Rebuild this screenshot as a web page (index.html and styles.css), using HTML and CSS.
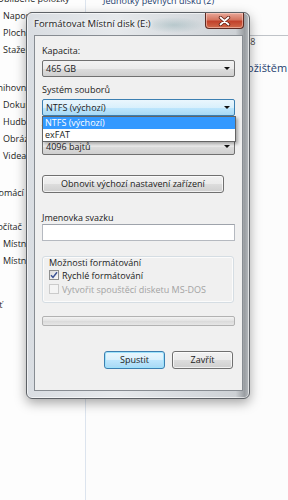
FILE: index.html
```html
<!DOCTYPE html>
<html lang="cs">
<head>
  <meta charset="UTF-8">
  <title>Formátovat Místní disk (E:)</title>
  <meta name="viewport" content="width=device-width, initial-scale=1.0" />
  <link rel="stylesheet" href="styles.css">
</head>
<body>
  <div class="explorer">
    <div class="nav">
      <div class="nav-list">
        <div class="nav-item first">Oblíbené položky</div>
        <div class="nav-item sub">Naposledy navštívené</div>
        <div class="nav-item sub">Plocha</div>
        <div class="nav-item sub">Stažené soubory</div>
        <div class="nav-item head gap-lib">Knihovny</div>
        <div class="nav-item sub">Dokumenty</div>
        <div class="nav-item sub">Hudba</div>
        <div class="nav-item sub">Obrázky</div>
        <div class="nav-item sub">Videa</div>
        <div class="nav-item head gap-home">Domácí skupina</div>
        <div class="nav-item head gap-pc">Počítač</div>
        <div class="nav-item sub">Místní disk (C:)</div>
        <div class="nav-item sub">Místní disk (E:)</div>
        <div class="nav-item head gap-net">Síť</div>
      </div>
    </div>
    <div class="main">
      <div class="group-title">Jednotky pevných disků (2)</div>
      <div class="drive">
        <div class="drive-bar"></div>
        <div class="drive-text">148</div>
      </div>
      <div class="group-title second">Zařízení s vyměnitelným úložištěm (1)</div>
    </div>
  </div>

  <!-- Dialog Formátovat -->
  <div class="dialog">
    <div class="titlebar">
      <span class="title">Formátovat Místní disk (E:)</span>
      <div class="close">
        <svg width="13" height="10" viewBox="0 0 13 10">
          <path d="M2.5 1.5 L10.5 8.5 M10.5 1.5 L2.5 8.5" stroke="#5a1c12" stroke-width="3.4" stroke-linecap="round"/>
          <path d="M2.5 1.5 L10.5 8.5 M10.5 1.5 L2.5 8.5" stroke="#fff" stroke-width="1.8" stroke-linecap="round"/>
        </svg>
      </div>
    </div>
    <div class="client">
      <div class="label">Kapacita:</div>
      <div class="combo">465 GB<span class="arrow"></span></div>

      <div class="label mt">Systém souborů</div>
      <div class="combo focus">NTFS (výchozí)<span class="arrow"></span></div>

      <div class="label mt">Velikost alokační jednotky</div>
      <div class="combo">4096 bajtů<span class="arrow"></span></div>

      <div class="btn wide">Obnovit výchozí nastavení zařízení</div>

      <div class="label vol">Jmenovka svazku</div>
      <div class="input"></div>

      <div class="group">
        <div class="group-label">Možnosti formátování</div>
        <div class="check-row top">
          <span class="check on">
            <svg width="8" height="8" viewBox="0 0 8 8"><path d="M1 4.2 L3 6.4 L7 1.2" fill="none" stroke="#3c5394" stroke-width="1.5"/></svg>
          </span>
          Rychlé formátování
        </div>
        <div class="check-row disabled">
          <span class="check"></span>
          Vytvořit spouštěcí disketu MS-DOS
        </div>
      </div>

      <div class="progress"></div>

      <div class="buttons">
        <div class="btn default">Spustit</div>
        <div class="btn">Zavřít</div>
      </div>

      <!-- rozbalený seznam -->
      <div class="dropdown-list">
        <div class="opt selected">NTFS (výchozí)</div>
        <div class="opt">exFAT</div>
      </div>
    </div>
  </div>
</body>
</html>
```

FILE: styles.css
```css
* {
  box-sizing: border-box;
}
body {
  margin: 0;
  width: 288px;
  height: 500px;
  overflow: hidden;
  background: #fcfcfc;
  font-family: "Open Sans", "Liberation Sans", sans-serif;
  font-size: 9px;
  color: #1b1b1b;
  position: relative;
}
.explorer {
  display: flex;
  height: 500px;
}
.nav {
  width: 86px;
  flex-shrink: 0;
  border-right: 1px solid #dce4ee;
  overflow: hidden;
  background: #fdfdfd;
}
.nav-list {
  margin-top: -10px;
}
.nav-item {
  line-height: 17px;
  height: 17px;
  white-space: nowrap;
  color: #1e1e1e;
}
.nav-item.first {
  margin-left: -3px;
}
.nav-item.sub {
  padding-left: 3px;
}
.nav-item.head {
  margin-left: -8px;
}
.gap-lib { margin-top: 21px; }
.gap-home { margin-top: 20px; }
.gap-pc { margin-top: 17px; }
.gap-net { margin-top: 27px; }

.main {
  flex: 1;
  padding-left: 17px;
  overflow: hidden;
}
.group-title {
  color: #1e3f6e;
  white-space: nowrap;
  line-height: 14px;
  margin-top: -6px;
}
.drive {
  margin-top: 27px;
  padding-left: 137px;
}
.drive-bar {
  border-top: 1px solid #bfc3c8;
}
.drive-text {
  line-height: 12px;
  color: #444;
}
.group-title.second {
  margin-top: 13px;
  padding-left: 8px;
  font-size: 11px;
}

/* Dialog */
.dialog {
  position: absolute;
  left: 26px;
  top: 12px;
  width: 224px;
  border: 1px solid #5d6166;
  border-radius: 6px;
  padding: 0 6px 7px 7px;
  background: linear-gradient(to right, #d9dde2 0%, #e6e9ec 40%, #d6dade 75%, #cdd1d5 94%, #9a9ea2 98%, #b8bcc0 100%);
  box-shadow: 0 4px 12px rgba(0,0,0,0.35), inset 0 0 0 1px rgba(255,255,255,0.6);
}
.titlebar {
  height: 22px;
  display: flex;
  align-items: flex-start;
  background: radial-gradient(ellipse 30px 8px at 140px 12px, rgba(120,160,165,0.35), transparent);
}
.title {
  font-size: 9.5px;
  line-height: 22px;
  color: #1a1a1a;
  text-shadow: 0 0 5px #fff, 0 0 3px #fff;
  white-space: nowrap;
}
.close {
  margin-left: auto;
  margin-right: -1px;
  width: 39px;
  height: 16px;
  border: 1px solid #5e2a22;
  border-top: none;
  border-radius: 0 0 4px 4px;
  background: linear-gradient(#e9a899 0%, #d47560 45%, #c2412b 55%, #d06a4a 100%);
  box-shadow: inset 0 0 0 1px rgba(255,220,210,0.5);
  display: flex;
  align-items: center;
  justify-content: center;
}
.client {
  position: relative;
  background: #f0f0f0;
  border: 1px solid #878c92;
  padding: 8px 7px 21px 7px;
}
.label {
  line-height: 14px;
  margin-bottom: 2px;
  white-space: nowrap;
}
.label.mt {
  margin-top: 6px;
}
.label.vol {
  margin-top: 18px;
  line-height: 13px;
  margin-bottom: 0;
}
.combo {
  position: relative;
  width: 193px;
  height: 17px;
  line-height: 15px;
  padding-left: 3px;
  border: 1px solid #707070;
  border-radius: 2px;
  background: linear-gradient(#f3f3f3 0%, #ebebeb 50%, #dddddd 51%, #cfcfcf 100%);
}
.combo.focus {
  border-color: #3c7fb1;
  background: linear-gradient(#eaf6fd 0%, #d9f0fc 50%, #bee6fd 51%, #a7d9f5 100%);
}
.arrow {
  position: absolute;
  right: 4px;
  top: 6px;
  border-left: 3px solid transparent;
  border-right: 3px solid transparent;
  border-top: 3px solid #111;
}
.btn {
  height: 18px;
  line-height: 16px;
  text-align: center;
  border: 1px solid #707070;
  border-radius: 3px;
  background: linear-gradient(#f2f2f2 0%, #ebebeb 50%, #dddddd 51%, #cfcfcf 100%);
  box-shadow: inset 0 0 0 1px rgba(255,255,255,0.7);
  white-space: nowrap;
}
.btn.wide {
  margin-top: 20px;
  width: 182px;
}
.input {
  width: 193px;
  height: 17px;
  background: #fff;
  border: 1px solid #b5b9c0;
  border-top-color: #9ea3ab;
}
.group {
  margin-top: 15px;
  width: 192px;
  border: 1px solid #d5dde3;
  border-radius: 3px;
  padding: 0 0 6px 6px;
  box-shadow: inset 0 0 0 1px #fbfbfb;
}
.group-label {
  line-height: 12px;
}
.check-row {
  display: flex;
  align-items: center;
  gap: 3px;
  height: 14px;
  white-space: nowrap;
}
.check-row.top {
  margin-top: -1px;
}
.check {
  width: 10px;
  height: 10px;
  border: 1px solid #8e8f8f;
  background: linear-gradient(135deg, #dcdcdc, #fafafa);
  display: flex;
  align-items: center;
  justify-content: center;
}
.check-row.disabled {
  color: #a3a3a3;
}
.check-row.disabled .check {
  border-color: #cbcbcb;
  background: #f4f4f4;
}
.progress {
  margin-top: 13px;
  width: 193px;
  height: 10px;
  border: 1px solid #b2b2b2;
  border-radius: 2px;
  background: linear-gradient(#f3f3f3, #e2e2e2 50%, #dadada 51%, #e6e6e6);
}
.buttons {
  margin-top: 25px;
  display: flex;
  justify-content: flex-end;
  gap: 7px;
  padding-right: 2px;
}
.buttons .btn {
  width: 61px;
}
.btn.default {
  border-color: #3c7fb1;
  box-shadow: inset 0 0 0 1px #9ee2fb;
  background: linear-gradient(#eaf6fd 0%, #d9f0fc 50%, #bee6fd 51%, #a7d9f5 100%);
}
.dropdown-list {
  position: absolute;
  left: 7px;
  top: 80px;
  width: 194px;
  border: 1px solid #646464;
  background: #fff;
  box-shadow: 2px 2px 3px rgba(0,0,0,0.3);
}
.opt {
  height: 12px;
  line-height: 12px;
  padding-left: 2px;
}
.opt.selected {
  background: #3399ff;
  color: #fff;
}
```
